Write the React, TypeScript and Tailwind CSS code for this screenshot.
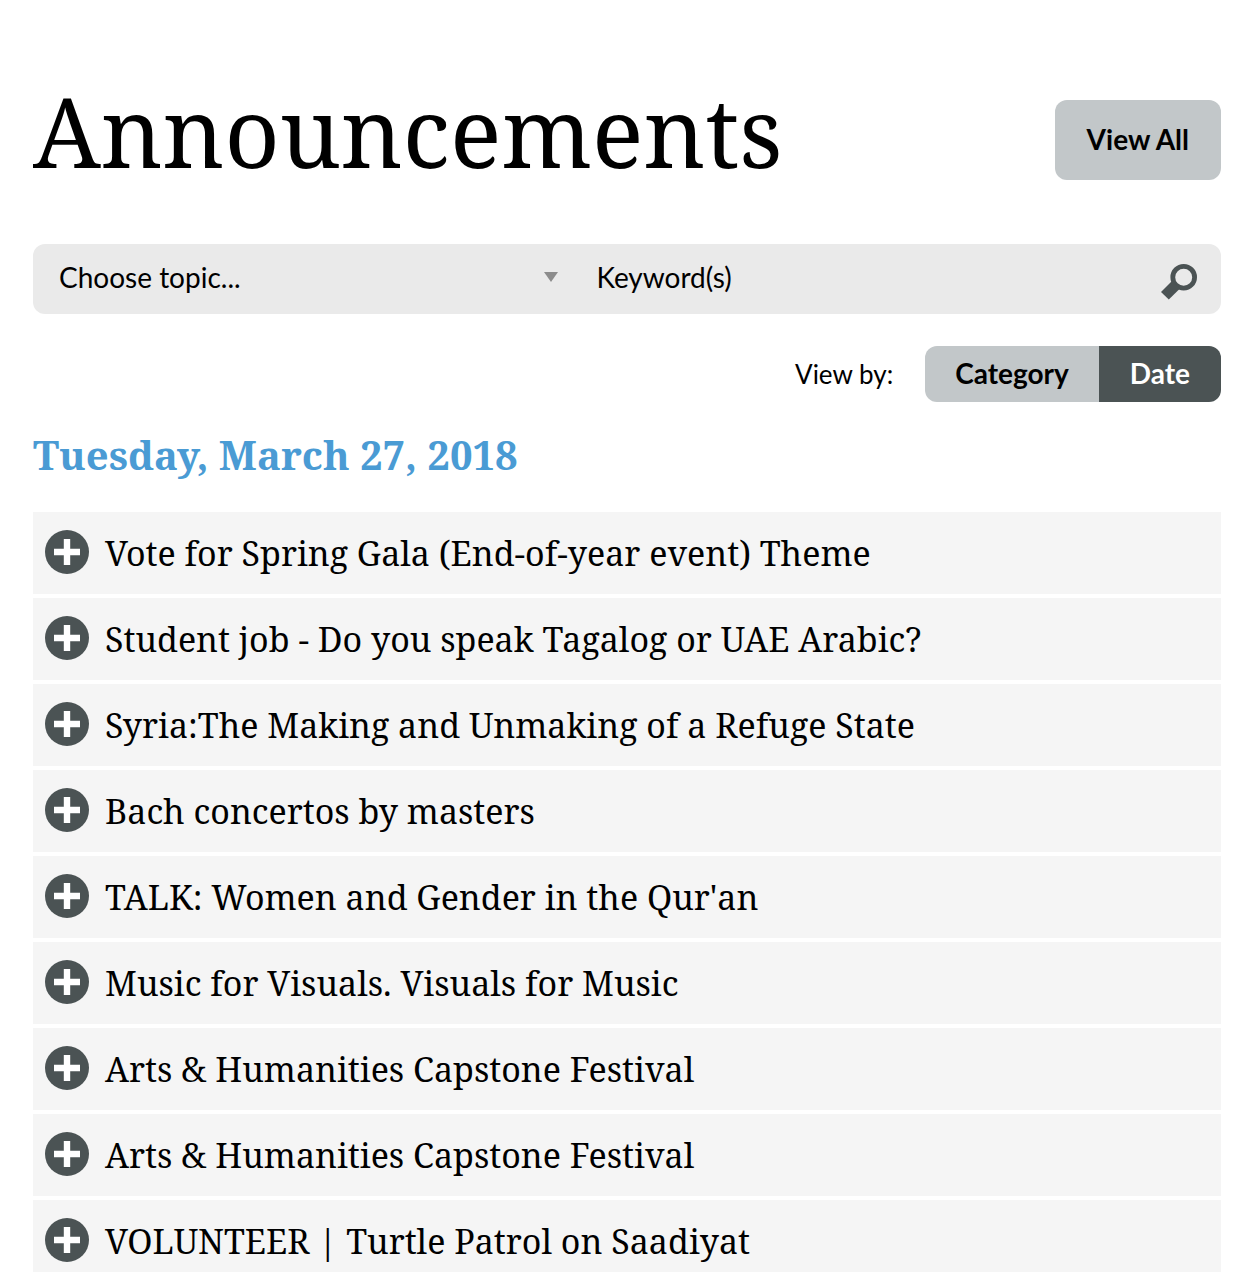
const announcements = [
  "Vote for Spring Gala (End-of-year event) Theme",
  "Student job - Do you speak Tagalog or UAE Arabic?",
  "Syria:The Making and Unmaking of a Refuge State",
  "Bach concertos by masters",
  "TALK: Women and Gender in the Qur'an",
  "Music for Visuals. Visuals for Music",
  "Arts & Humanities Capstone Festival",
  "Arts & Humanities Capstone Festival",
  "VOLUNTEER | Turtle Patrol on Saadiyat",
];

function PlusIcon() {
  return (
    <svg viewBox="0 0 44 44" className="mb-0.5 size-11 shrink-0" aria-hidden="true">
      <circle cx="22" cy="22" r="22" fill="#4b5354" />
      <path d="M18.8 9h6.4v9.8H35v6.4h-9.8V35h-6.4v-9.8H9v-6.4h9.8z" fill="#fff" />
    </svg>
  );
}

function SearchIcon() {
  return (
    <svg viewBox="0 0 36 38" className="h-[38px] w-9" aria-hidden="true">
      <circle cx="22.7" cy="15.2" r="10.9" fill="none" stroke="#4b5354" strokeWidth="4.8" />
      <path d="M11.5 18.5 19 26.5 7.8 37.6 0 29.9z" fill="#4b5354" />
    </svg>
  );
}

function SearchBar() {
  return (
    <form role="search" className="mt-16 flex h-[70px] items-center rounded-xl bg-[#eaeaea] pr-6" onSubmit={(e) => e.preventDefault()}>
      <div className="grid w-[46%] items-center">
        <select
          aria-label="Topic"
          className="col-start-1 row-start-1 h-[70px] w-full appearance-none bg-transparent pr-12 pb-1 pl-[26px] text-[28px]"
        >
          <option>Choose topic...</option>
        </select>
        <svg viewBox="0 0 14 10" className="pointer-events-none col-start-1 row-start-1 mr-2.5 mb-1 h-[10px] w-[14px] justify-self-end" aria-hidden="true">
          <path d="M0 0h14L7 10z" fill="#8c8c8c" />
        </svg>
      </div>
      <input
        type="text"
        aria-label="Keyword(s)"
        placeholder="Keyword(s)"
        className="ml-7 h-[70px] min-w-0 flex-1 bg-transparent pb-1 text-[28px] placeholder:text-black"
      />
      <button type="submit" aria-label="Search" className="mt-1">
        <SearchIcon />
      </button>
    </form>
  );
}

export default function App() {
  return (
    <main className="bg-white pt-[82px] pr-[22px] pl-[33px] font-['Lato',sans-serif] text-black">
      <header className="flex items-end justify-between">
        <h1 className="font-['Noto_Serif',serif] text-8xl leading-[98px]">
          Announcements
        </h1>
        <button type="button" className="h-20 rounded-xl bg-[#c2c7c9] px-8 pb-0.5 text-[28px] font-bold">
          View All
        </button>
      </header>

      <SearchBar />

      <div className="mt-8 flex h-14 items-center justify-end gap-8">
        <span id="view-by" className="text-[26px]">View by:</span>
        <div role="group" aria-labelledby="view-by" className="flex h-14 overflow-hidden rounded-xl text-[28px] font-bold">
          <button type="button" aria-pressed="false" className="bg-[#c2c7c9] px-[30px] pb-0.5">Category</button>
          <button type="button" aria-pressed="true" className="bg-[#4b5354] px-[31px] pb-0.5 text-white">Date</button>
        </div>
      </div>

      <h2 className="mt-[23px] font-['Noto_Serif',serif] text-[40px] leading-[60px] font-bold text-[#4a9bd4]">
        Tuesday, March 27, 2018
      </h2>

      <ul className="mt-[27px] flex flex-col gap-1">
        {announcements.map((title, i) => (
          <li key={i}>
            <button type="button" aria-expanded="false" className="flex h-[82px] w-full items-center gap-4 bg-[#f5f5f5] px-3 text-left">
              <PlusIcon />
              <span className="font-['Noto_Serif',serif] text-[34px] leading-[46px]">{title}</span>
            </button>
          </li>
        ))}
      </ul>
    </main>
  );
}
